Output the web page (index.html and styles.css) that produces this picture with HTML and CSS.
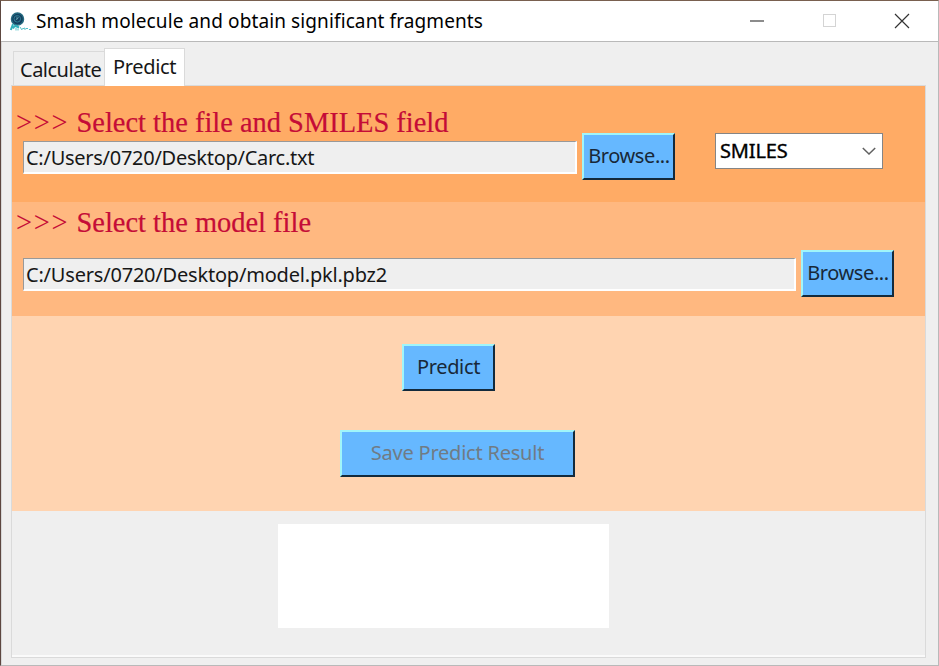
FILE: index.html
```html
<!DOCTYPE html>
<html lang="en">
<head>
<meta charset="utf-8">
<title>Smash molecule and obtain significant fragments</title>
<link rel="stylesheet" href="styles.css">
</head>
<body>
<div class="window">
  <header class="titlebar">
    <svg class="logo" width="22" height="20" viewBox="0 0 22 20">
      <circle cx="8.5" cy="7" r="6" fill="#123f5f" stroke="#24697f" stroke-width="1.5"/>
      <circle cx="8.3" cy="6.800" r="3.3" fill="none" stroke="#2d7c91" stroke-width="1"/>
      <path d="M6.700 8l3-2.500M8 4.500v3" stroke="#69aab5" stroke-width=".8"/>
      <path d="M4 12L1.800 18M6 13.500l-2 3M6 13.500l4 2" fill="none" stroke="#2fb0bb" stroke-width="2"/>
      <path d="M7 15.500v3M9 16.500v2M11 15l2 3M13 17l3-1v2M17 16.500h2M20 17.500h2" fill="none" stroke="#54c1c8" stroke-width="1"/>
    </svg>
    <h1 class="title">Smash molecule and obtain significant fragments</h1>
    <svg class="controls" width="160" height="16" viewBox="0 0 160 16">
      <path d="M0 8h14" stroke="#666" stroke-width="1.500"/>
      <rect x="73.500" y="1.500" width="12" height="12" fill="none" stroke="#d4d4d4"/>
      <path d="M145 1l14 14M159 1l-14 14" stroke="#333" stroke-width="1.200"/>
    </svg>
  </header>
  <main class="client">
    <nav class="tabs">
      <div class="tab"><span class="t-calc">Calculate</span></div>
      <div class="tab active"><span class="t-tab">Predict</span></div>
    </nav>
    <div class="panel">
      <section class="band data">
        <h2 class="heading"><span class="prompt">&gt;&gt;&gt;</span> Select the file and SMILES field</h2>
        <div class="row">
          <div class="entry short"><span class="t-path1">C:/Users/0720/Desktop/Carc.txt</span></div>
          <button class="btn"><span class="t-browse">Browse...</span></button>
          <div class="combo"><span class="t-smiles">SMILES</span>
            <svg width="14" height="9" viewBox="0 0 14 9"><path d="M.8 1l6.200 6L13.200 1" fill="none" stroke="#606060" stroke-width="1.500"/></svg>
          </div>
        </div>
      </section>
      <section class="band model">
        <h2 class="heading"><span class="prompt">&gt;&gt;&gt;</span> Select the model file</h2>
        <div class="row">
          <div class="entry long"><span class="t-path2">C:/Users/0720/Desktop/model.pkl.pbz2</span></div>
          <button class="btn"><span class="t-browse">Browse...</span></button>
        </div>
      </section>
      <section class="band run">
        <button class="btn predict"><span class="t-predict">Predict</span></button>
        <button class="btn save" disabled><span class="t-save">Save Predict Result</span></button>
      </section>
      <section class="output"><div class="canvas"></div></section>
    </div>
  </main>
</div>
</body>
</html>
```
FILE: styles.css
```css
* { box-sizing: border-box; }
body {
  margin: 0;
  width: 939px;
  height: 666px;
  overflow: hidden;
  font: 20px/28px "Noto Sans", "Open Sans", sans-serif;
  color: #171717;
  background: #efefef;
}
h1, h2 { margin: 0; font-weight: 400; }
span, .title { white-space: nowrap; }
.window {
  height: 666px;
  display: flex;
  flex-direction: column;
  border: 1px solid #b9b9b9;
  border-top-color: #79604f;
  border-left-color: #5d4740;
}
.titlebar {
  height: 41px;
  display: flex;
  align-items: center;
  padding: 0 28px 0 8px;
  background: #fff;
  border-bottom: 1px solid #b9b9b9;
}
.logo { margin-top: 2px; }
.title { margin-left: 5px; font-size: 19px; letter-spacing: .11px; color: #000; }
.controls { margin-left: auto; }
.client {
  flex: 1;
  display: flex;
  flex-direction: column;
  padding: 6px 12px 7px 9px;
  border-left: 1px solid #d7d7d7;
}
.tabs { display: flex; align-items: flex-end; height: 38px; padding-left: 2px; }
.tab {
  width: 92px;
  height: 35px;
  padding: 4px 0 0 6px;
  border: 1px solid #dadada;
  border-bottom: 0;
}
.tab.active {
  position: relative;
  width: 81px;
  height: 38px;
  margin-left: -1px;
  padding: 4px 0 0 8px;
  background: #fff;
}
.t-calc { letter-spacing: -.5px; }
.t-tab, .t-predict { letter-spacing: -.35px; }
.t-path1 { letter-spacing: -.27px; }
.t-path2 { letter-spacing: -.2px; }
.t-browse { letter-spacing: -.42px; padding-left: 1px; }
.t-save { letter-spacing: -.22px; }
.t-smiles { letter-spacing: -.15px; -webkit-text-stroke: .35px; }
.panel {
  flex: 1;
  display: flex;
  flex-direction: column;
  margin-top: -1px;
  border: 1px solid #dadada;
}
.band.data { height: 116px; padding-top: 20px; background: #ffab65; }
.band.model { height: 114px; padding-top: 4px; background: #ffb880; }
.band.run {
  height: 195px;
  padding-top: 28px;
  background: #ffd4b1;
  display: flex;
  flex-direction: column;
  align-items: flex-start;
}
.heading {
  height: 32px;
  padding-left: 4px;
  font: 28.45px/34px "Liberation Serif", serif;
  color: #c50c37;
  white-space: nowrap;
  -webkit-text-stroke: .2px;
}
.prompt { letter-spacing: 1.75px; -webkit-text-stroke: 0; }
.row { display: flex; align-items: flex-start; padding-left: 11px; }
.data .row { margin-top: -5px; }
.model .row { margin-top: 12px; }
.entry {
  height: 33px;
  margin-top: 8px;
  padding: 2px 0 0 2px;
  background: #efefef;
  border: 2px solid;
  border-color: #999 #fff #fff #999;
  border-width: 1px 2px 2px 1px;
}
.short { width: 554px; }
.long { width: 773px; }
.btn {
  display: flex;
  align-items: center;
  justify-content: center;
  width: 93px;
  height: 47px;
  padding: 0 0 2px;
  margin: 0 0 0 5px;
  font: inherit;
  color: #182838;
  background: #66b8ff;
  border: 2px solid;
  border-color: #a0f5fa #132a3c #132a3c #a0f5fa;
}
.combo {
  display: flex;
  align-items: center;
  justify-content: space-between;
  width: 168px;
  height: 36px;
  margin-left: 40px;
  padding: 0 6px 0 4px;
  background: #fff;
  border: 1px solid #858585;
  color: #000;
}
.btn.predict { margin-left: 390px; }
.btn.save { width: 235px; margin: 39px 0 0 328px; color: #707b85; }
.output { flex: 1; padding: 13px 0 0 265.5px; border-bottom: 2px solid #fafafa; }
.canvas { width: 331.500px; height: 104px; background: #fff; }
```
